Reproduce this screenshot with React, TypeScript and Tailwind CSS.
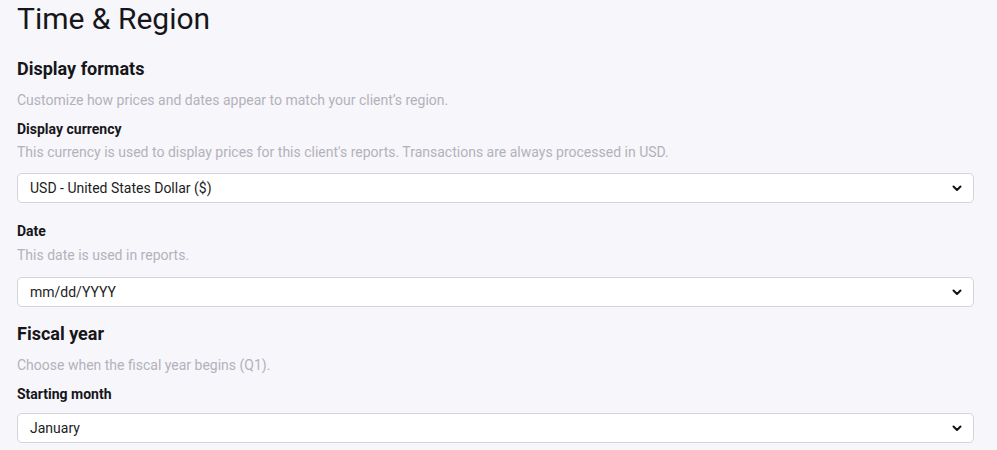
import React from 'react';

const FONT = { fontFamily: 'Roboto, "Liberation Sans", sans-serif' };

const Chevron = () => (
  <svg className="w-[12px] h-[12px] text-[#111]" viewBox="0 0 24 24" fill="none" stroke="currentColor" strokeWidth={4} strokeLinecap="round" strokeLinejoin="round">
    <path d="M5 9l7 7 7-7" />
  </svg>
);

const SelectBox: React.FC<{ value: string; className?: string }> = ({ value, className }) => (
  <div className={`flex items-center justify-between h-[30px] bg-white border border-[#d4d3dc] rounded-[5px] pl-[12px] pr-[10px] ${className ?? ''}`}>
    <span className="text-[14px] text-[#1d1d22]">{value}</span>
    <Chevron />
  </div>
);

export default function App() {
  return (
    <div style={FONT} className="min-h-[450px] w-full bg-[#f7f6fb] pl-[17px] pr-[23px] flex flex-col">
      <h1 className="text-[30px] leading-[38px] text-[#16161a] font-normal">Time &amp; Region</h1>

      {/* 표시 형식 */}
      <h2 className="mt-[19px] text-[18px] leading-[24px] font-bold text-[#16161a]">Display formats</h2>
      <p className="mt-[9px] text-[14px] leading-[20px] text-[#b3b2ba]">Customize how prices and dates appear to match your client’s region.</p>

      <label className="mt-[9px] text-[14px] leading-[20px] font-bold text-[#16161a]">Display currency</label>
      <p className="mt-[3px] text-[14px] leading-[20px] text-[#b3b2ba]">This currency is used to display prices for this client's reports. Transactions are always processed in USD.</p>
      <SelectBox className="mt-[11px]" value="USD - United States Dollar ($)" />

      <label className="mt-[18px] text-[14px] leading-[20px] font-bold text-[#16161a]">Date</label>
      <p className="mt-[4px] text-[14px] leading-[20px] text-[#b3b2ba]">This date is used in reports.</p>
      <SelectBox className="mt-[12px]" value="mm/dd/YYYY" />

      {/* 회계연도 */}
      <h2 className="mt-[15px] text-[18px] leading-[24px] font-bold text-[#16161a]">Fiscal year</h2>
      <p className="mt-[9px] text-[14px] leading-[20px] text-[#b3b2ba]">Choose when the fiscal year begins (Q1).</p>

      <label className="mt-[9px] text-[14px] leading-[20px] font-bold text-[#16161a]">Starting month</label>
      <SelectBox className="mt-[9px]" value="January" />
    </div>
  );
}
